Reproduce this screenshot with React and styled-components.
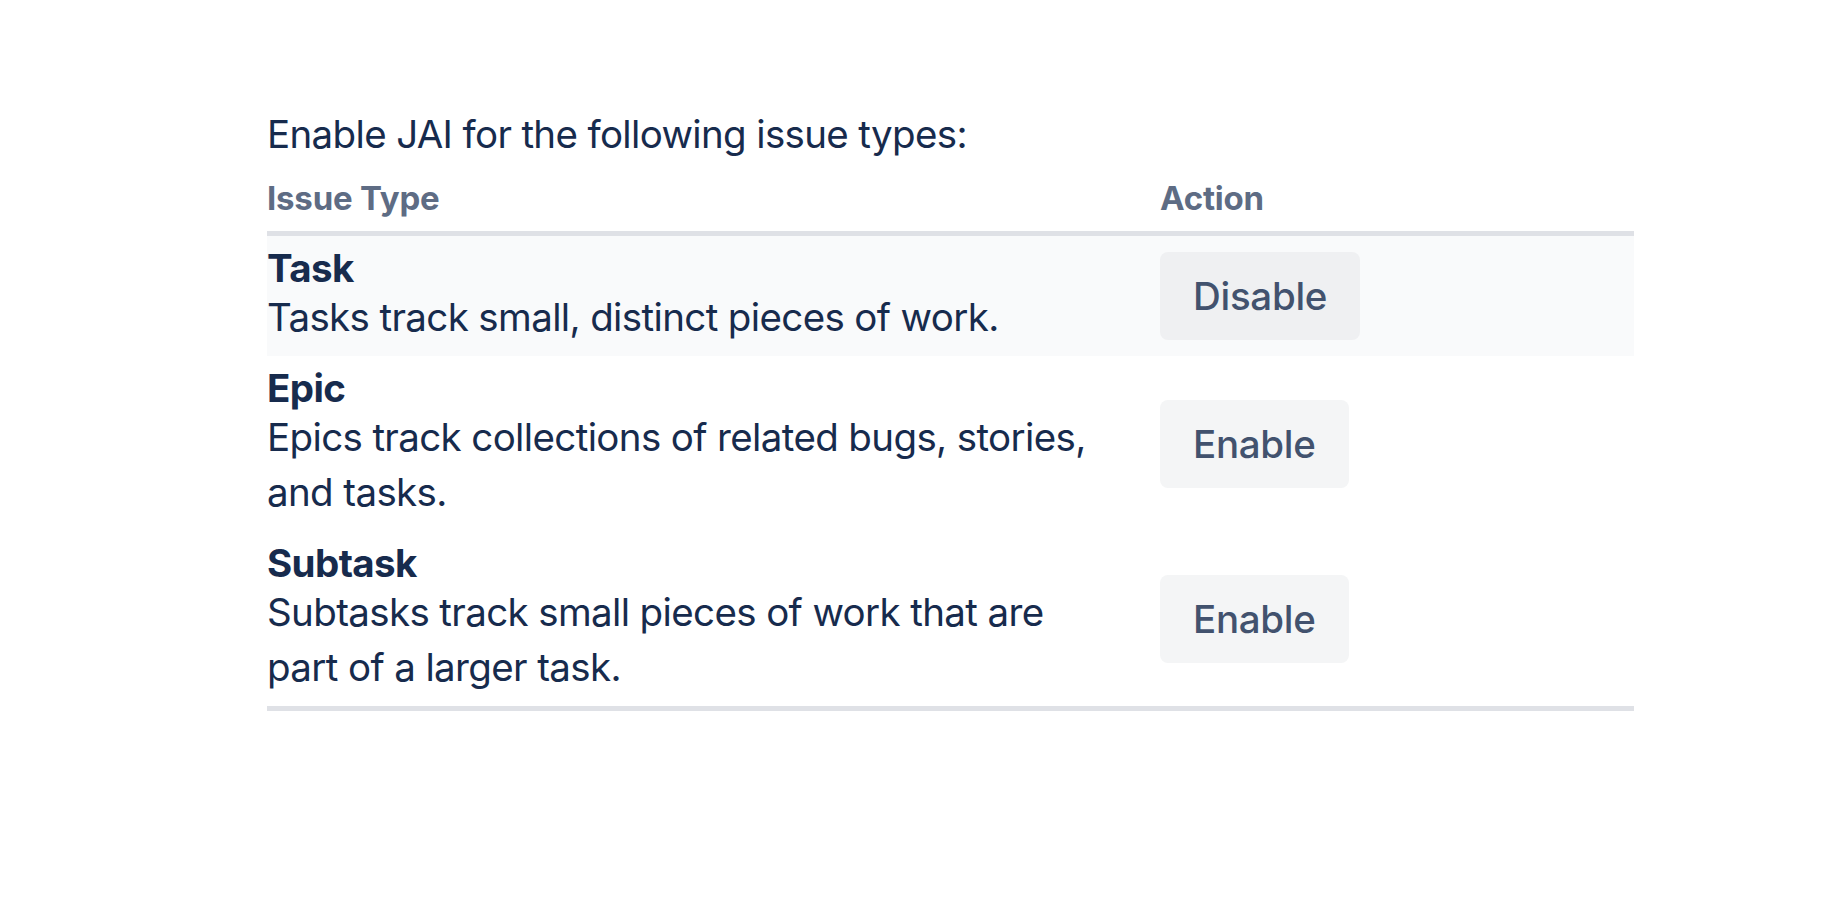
import React from 'react';
import styled, { createGlobalStyle } from 'styled-components';

const GlobalStyle = createGlobalStyle`
  html, body {
    margin: 0;
    padding: 0;
    background: #ffffff;
  }
  body {
    font-family: Inter, "Noto Sans", "Liberation Sans", sans-serif;
    color: #172b4d;
  }
`;

const Page = styled.div`
  padding: 107px 0 0 267px;
`;

const Intro = styled.p`
  margin: 0 0 3px 0;
  font-size: 38.5px;
  line-height: 55px;
  letter-spacing: -0.65px;
  color: #172b4d;
`;

const Table = styled.table`
  width: 1367px;
  border-collapse: collapse;
  table-layout: fixed;
`;

const Head = styled.thead`
  border-bottom: 5.5px solid #dfe1e6;
`;

const Body = styled.tbody`
  border-bottom: 5.5px solid #dfe1e6;
`;

const Th = styled.th`
  text-align: left;
  padding: 11px 22px;
  font-size: 33px;
  line-height: 44px;
  font-weight: 700;
  color: #5e6c84;
  letter-spacing: -0.2px;

  &:first-child {
    padding-left: 0;
  }
`;

const Row = styled.tr`
  background: ${(p) => (p.$active ? '#f9fafb' : 'transparent')};
`;

const Td = styled.td`
  padding: 11px 22px;
  vertical-align: middle;

  &:first-child {
    padding-left: 0;
  }
`;

const TypeName = styled.div`
  font-size: 38.5px;
  line-height: 43px;
  font-weight: 700;
  letter-spacing: -0.6px;
  color: #172b4d;
`;

const TypeDesc = styled.div`
  font-size: 38.5px;
  line-height: 55px;
  letter-spacing: -0.63px;
  color: #172b4d;
`;

const ActionButton = styled.button`
  height: 88px;
  padding: 0 33px;
  border: none;
  border-radius: 8px;
  font-family: inherit;
  font-size: 38.5px;
  font-weight: 500;
  letter-spacing: -0.3px;
  color: #42526e;
  background: ${(p) => (p.$active ? '#eff0f2' : '#f4f5f6')};
  cursor: pointer;
`;

const issueTypes = [
  {
    name: 'Task',
    description: 'Tasks track small, distinct pieces of work.',
    enabled: true,
  },
  {
    name: 'Epic',
    description: 'Epics track collections of related bugs, stories, and tasks.',
    enabled: false,
  },
  {
    name: 'Subtask',
    description: 'Subtasks track small pieces of work that are part of a larger task.',
    enabled: false,
  },
];

const App = () => {
  return (
    <Page>
      <GlobalStyle />
      <Intro>Enable JAI for the following issue types:</Intro>
      <Table>
        <colgroup>
          <col style={{ width: 871 }} />
          <col style={{ width: 496 }} />
        </colgroup>
        <Head>
          <tr>
            <Th>Issue Type</Th>
            <Th>Action</Th>
          </tr>
        </Head>
        <Body>
          {issueTypes.map((type) => (
            <Row key={type.name} $active={type.enabled}>
              <Td>
                <TypeName>{type.name}</TypeName>
                <TypeDesc>{type.description}</TypeDesc>
              </Td>
              <Td>
                <ActionButton $active={type.enabled}>
                  {type.enabled ? 'Disable' : 'Enable'}
                </ActionButton>
              </Td>
            </Row>
          ))}
        </Body>
      </Table>
    </Page>
  );
};

export default App;
